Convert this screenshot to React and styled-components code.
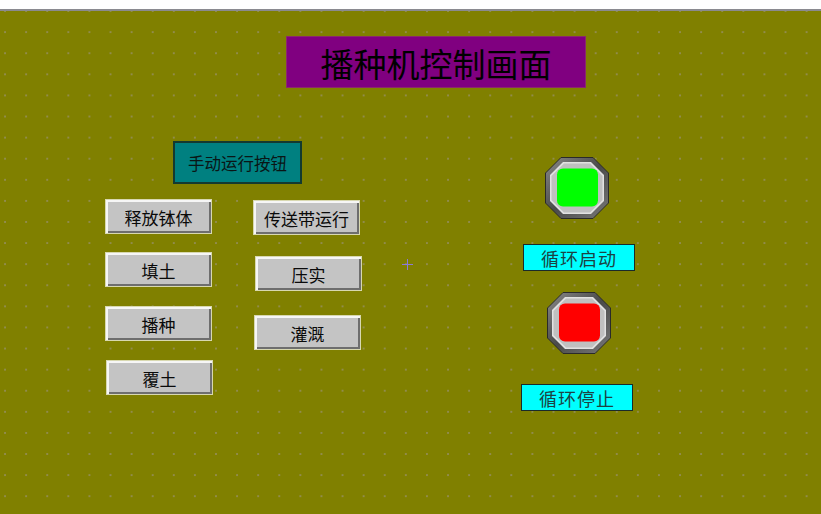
import React from 'react'
import styled, { createGlobalStyle } from 'styled-components'

const GlobalStyle = createGlobalStyle`
  html, body {
    margin: 0;
    padding: 0;
    background: #ffffff;
  }
  * { box-sizing: border-box; }
`;

const Page = styled.div`
  width: 821px;
  height: 514px;
  display: flex;
  flex-direction: column;
  background: #ffffff;
  padding-top: 9px;
  font-family: "Noto Sans CJK SC", "Noto Sans", sans-serif;
  overflow: hidden;
`;

const Canvas = styled.div`
  position: relative;
  flex: 1;
  border-top: 2px solid #8a8a90;
  background-color: #808000;
  background-image: radial-gradient(circle, rgba(160,150,140,0.55) 0.8px, transparent 1.3px);
  background-size: 21.1px 21.1px;
  background-position: -5.5px -10.5px;
  display: flex;
  flex-direction: column;
`;

const TitleRow = styled.div`
  display: flex;
  padding: 25px 0 0 286px;
`;

const TitleBox = styled.div`
  width: 300px;
  height: 52px;
  background: #800080;
  border: 1px solid #8a2a6a;
  display: flex;
  align-items: center;
  justify-content: center;
  color: #000000;
  font-size: 33px;
  font-weight: 400;
  padding-top: 2px;
`;

const Main = styled.div`
  display: flex;
  margin-top: 53px;
`;

const LeftPanel = styled.div`
  display: flex;
  flex-direction: column;
  padding-left: 105px;
  width: 400px;
`;

const ManualButton = styled.div`
  margin-left: 68px;
  width: 129px;
  height: 43px;
  background: #008080;
  border: 2px solid #143a30;
  display: flex;
  align-items: center;
  justify-content: center;
  color: #0a1616;
  font-size: 16.5px;
`;

const Columns = styled.div`
  display: flex;
  gap: 40px;
  margin-top: 15px;
`;

const Column = styled.div`
  display: flex;
  flex-direction: column;
`;

const PushButton = styled.div`
  width: 107px;
  height: 35px;
  margin-top: ${p => p.$top || 0}px;
  margin-left: ${p => p.$left || 0}px;
  background: #c4c4c4;
  border: 1px solid #d8d8b0;
  box-shadow: inset 2px 2px 0 #f6f6f6, inset -2px -2px 0 #6e6e6e;
  display: flex;
  align-items: center;
  justify-content: center;
  color: #0a0a0a;
  font-size: 17px;
  padding-top: 1px;
`;

const Cursor = styled.div`
  position: absolute;
  left: 402px;
  top: 248px;
  width: 11px;
  height: 11px;
  &::before, &::after {
    content: "";
    position: absolute;
    background: #8a7ad8;
  }
  &::before { left: 5px; top: 0; width: 1px; height: 11px; }
  &::after { top: 5px; left: 0; width: 11px; height: 1px; }
`;

const RightPanel = styled.div`
  display: flex;
  flex-direction: column;
  align-items: center;
  width: 112px;
  margin-left: 122px;
`;

const LampWrap = styled.div`
  width: 64px;
  height: 62px;
  margin-top: ${p => p.$top}px;
  margin-left: ${p => p.$shift || 0}px;
`;

const Label = styled.div`
  width: 112px;
  height: 27px;
  margin-top: ${p => p.$top}px;
  margin-left: ${p => p.$shift || 0}px;
  background: #00ffff;
  border: 1px solid #1a2a2a;
  display: flex;
  align-items: center;
  justify-content: center;
  color: #1c4242;
  font-size: 18px;
  letter-spacing: 1px;
`;

const Lamp = ({ color, id }) => (
  <svg width="64" height="62" viewBox="0 0 64 62">
    <defs>
      <linearGradient id={`ring-${id}`} x1="0" y1="0" x2="1" y2="1">
        <stop offset="0" stopColor="#8a8a8a" />
        <stop offset="0.5" stopColor="#4a4a4a" />
        <stop offset="1" stopColor="#7a7a7a" />
      </linearGradient>
    </defs>
    <polygon
      points="16,0.5 48,0.5 63.5,16 63.5,46 48,61.5 16,61.5 0.5,46 0.5,16"
      fill={`url(#ring-${id})`}
      stroke="#2a2a2a"
    />
    <polygon
      points="18,5 46,5 59,18 59,44 46,57 18,57 5,44 5,18"
      fill="#e2e2e2"
    />
    <polygon
      points="19,6.5 45,6.5 57.5,19 57.5,43 45,55.5 19,55.5 6.5,43 6.5,19"
      fill="#c0c0c0"
    />
    <rect x="12" y="11.5" width="41" height="38" rx="6" fill={color} />
  </svg>
);

const App = () => {
  return (
    <>
      <GlobalStyle />
      <Page>
        <Canvas>
          <TitleRow>
            <TitleBox>播种机控制画面</TitleBox>
          </TitleRow>
          <Main>
            <LeftPanel>
              <ManualButton>手动运行按钮</ManualButton>
              <Columns>
                <Column>
                  <PushButton>释放钵体</PushButton>
                  <PushButton $top={18}>填土</PushButton>
                  <PushButton $top={19}>播种</PushButton>
                  <PushButton $top={19} $left={1}>覆土</PushButton>
                </Column>
                <Column>
                  <PushButton $top={1}>传送带运行</PushButton>
                  <PushButton $top={21} $left={2}>压实</PushButton>
                  <PushButton $top={24} $left={1}>灌溉</PushButton>
                </Column>
              </Columns>
            </LeftPanel>
            <RightPanel>
              <LampWrap $top={16} $shift={-2}>
                <Lamp color="#00ff00" id="start" />
              </LampWrap>
              <Label $top={25} $shift={2}>循环启动</Label>
              <LampWrap $top={21} $shift={2}>
                <Lamp color="#ff0000" id="stop" />
              </LampWrap>
              <Label $top={30} $shift={-2}>循环停止</Label>
            </RightPanel>
          </Main>
          <Cursor />
        </Canvas>
      </Page>
    </>
  )
}

export default App
